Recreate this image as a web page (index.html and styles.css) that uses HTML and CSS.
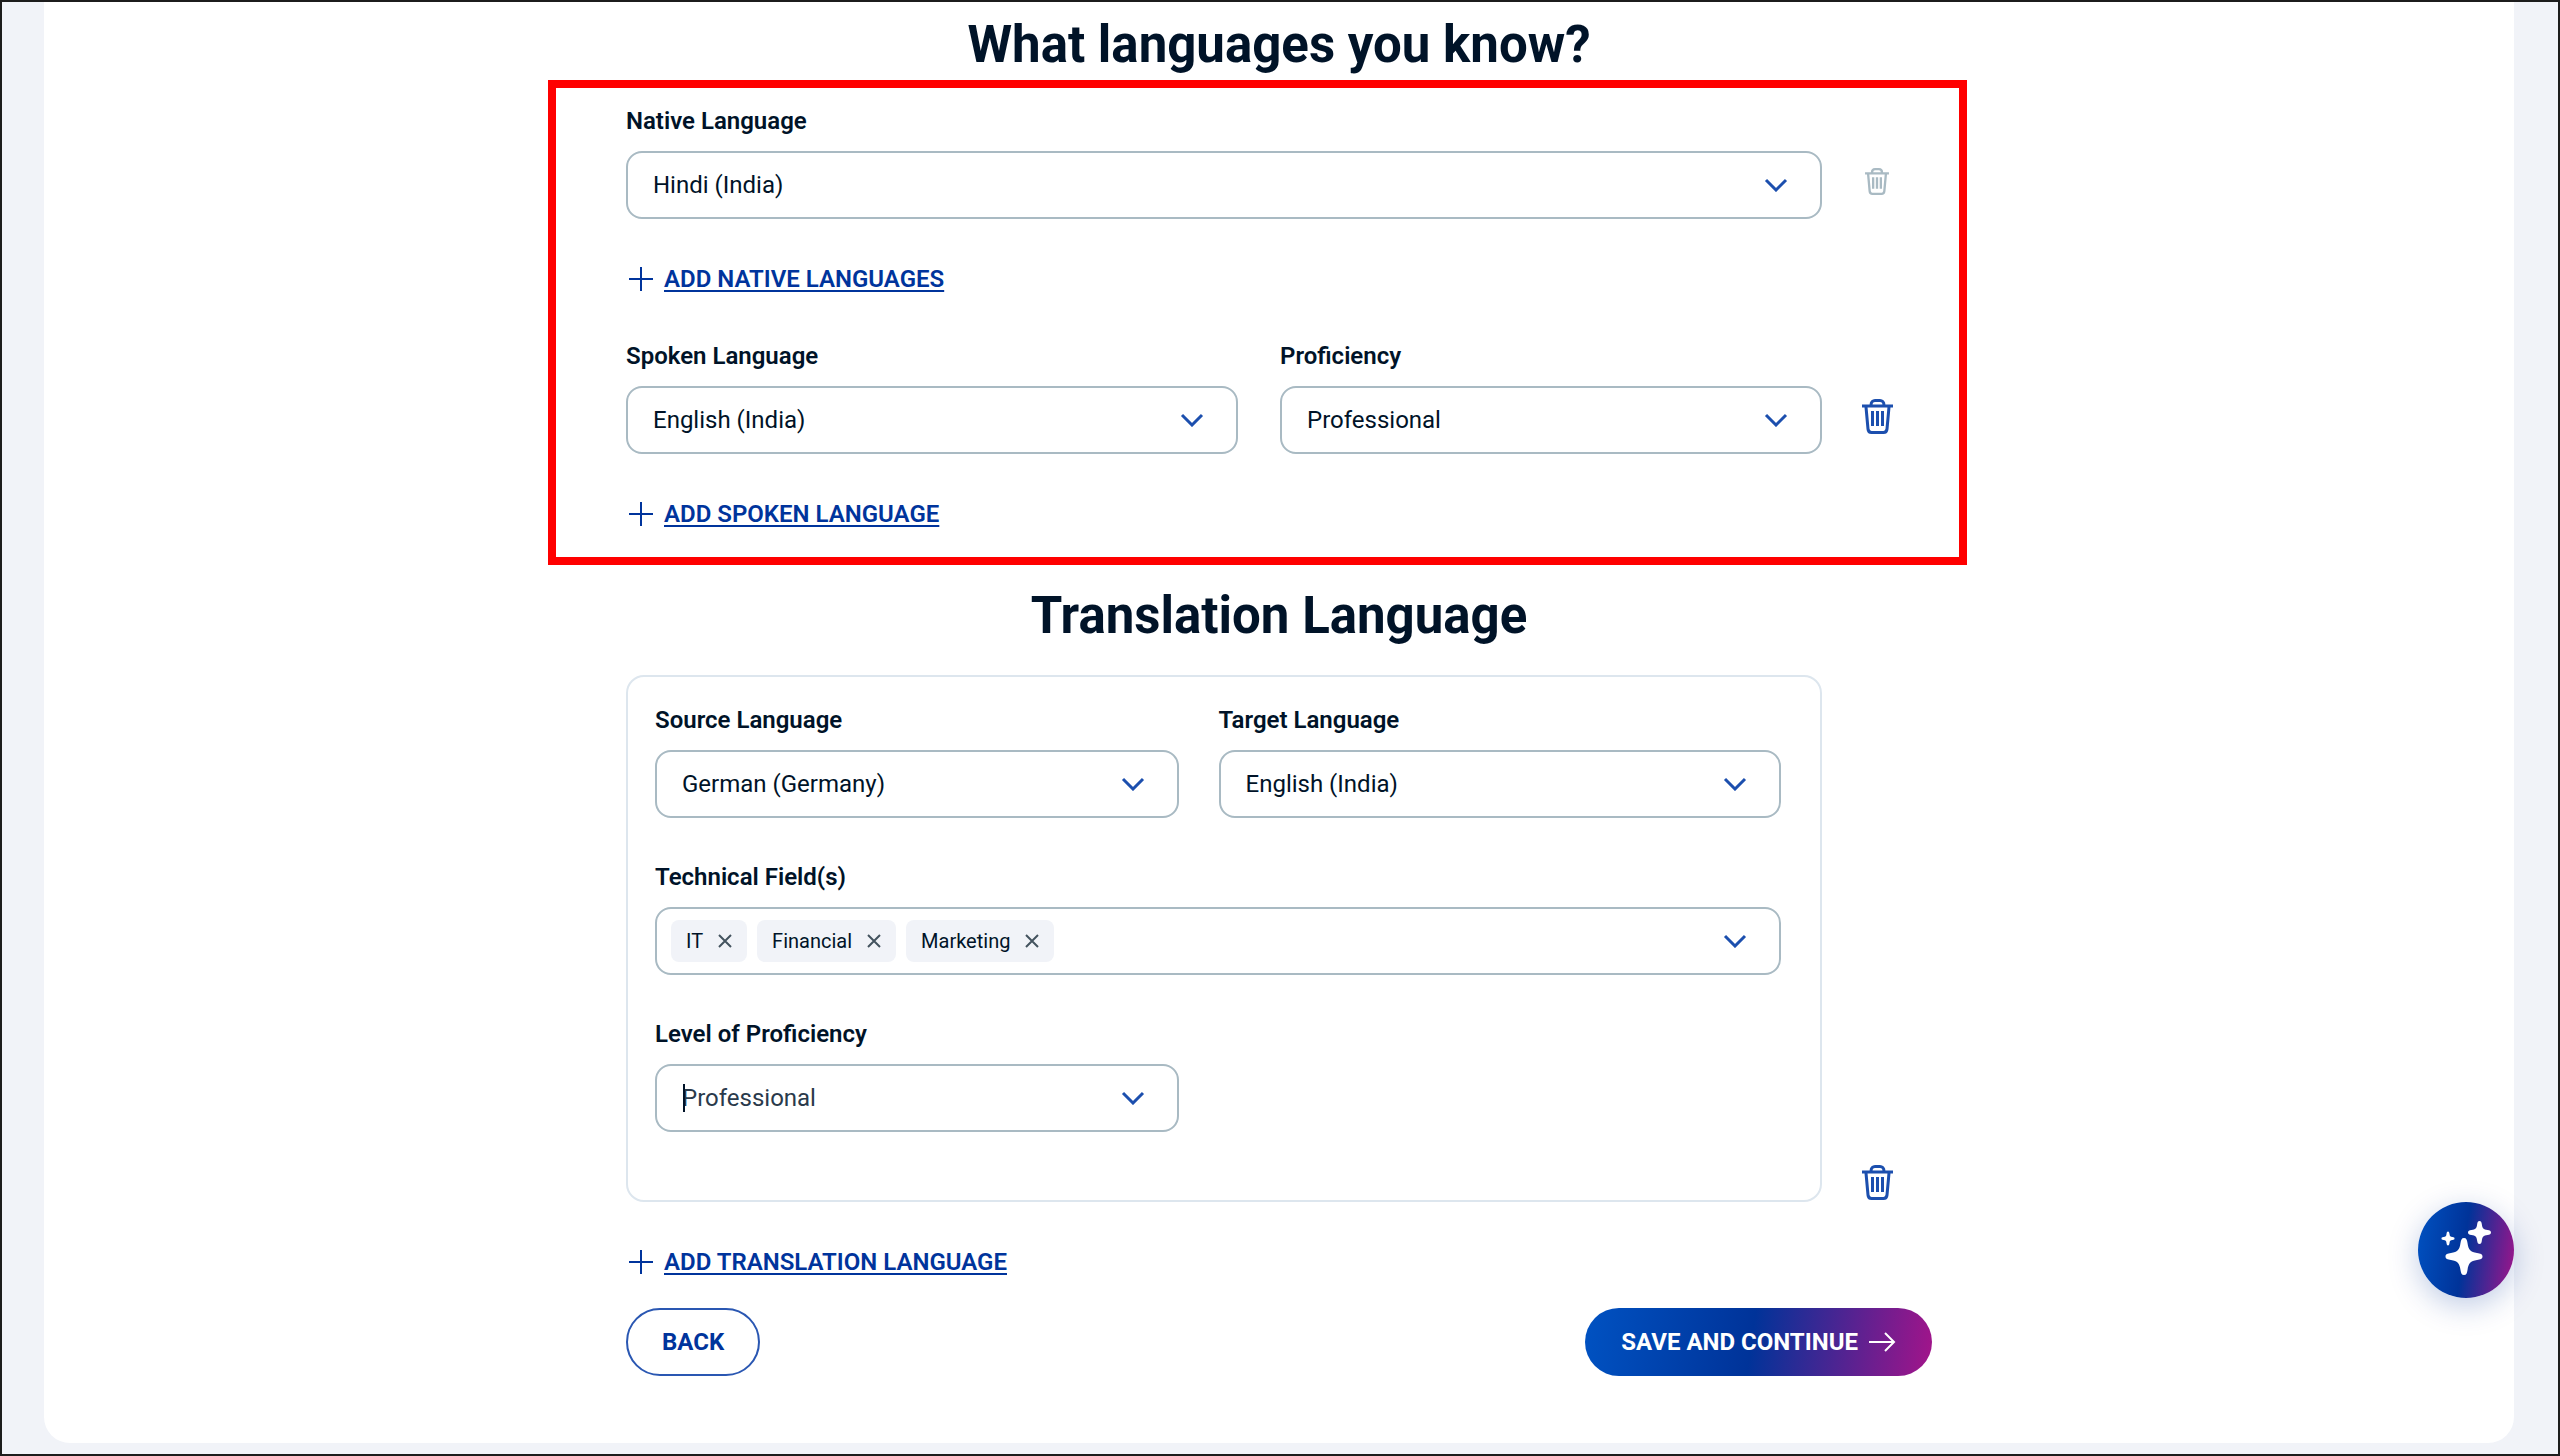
FILE: index.html
```html
<!DOCTYPE html>
<html lang="en">
<head>
    <meta charset="UTF-8">
    <meta name="viewport" content="width=device-width, initial-scale=1.0">
    <title>Languages</title>
    <link rel="stylesheet" href="styles.css">
</head>
<body>
    <!-- Shared icons -->
    <svg class="icon-defs" aria-hidden="true">
        <symbol id="icon-trash" viewBox="0 0 33 35">
            <path d="M1 7H32M10 6C10 3 12 1.5 14 1.5H19C21 1.5 23 3 23 6M5 8L7 30C7.200 32 8.500 33.500 10.500 33.500H22.500C24.500 33.500 25.800 32 26 30L28 8M11.500 12V27M16.500 12V27M21.500 12V27"/>
        </symbol>
        <symbol id="icon-plus" viewBox="0 0 26 26">
            <path d="M13 1V25M1 13H25"/>
        </symbol>
        <symbol id="icon-close" viewBox="0 0 14 14">
            <path d="M1 1L13 13M13 1L1 13"/>
        </symbol>
    </svg>

    <main class="page-card">
        <form class="language-form" id="languageForm">
            <h1>What languages you know?</h1>
            <section class="known-languages">
                <div class="form-row">
                    <div class="form-group">
                        <label for="nativeLanguage">Native Language</label>
                        <select class="control" id="nativeLanguage">
                            <option>Hindi (India)</option>
                        </select>
                    </div>
                    <button type="button" class="delete-btn small" aria-label="Delete native language" disabled>
                        <svg><use href="#icon-trash"/></svg>
                    </button>
                </div>
                <a href="#" class="add-link"><svg><use href="#icon-plus"/></svg><span>ADD NATIVE LANGUAGES</span></a>

                <div class="form-row">
                    <div class="spoken-fields">
                        <div class="form-group">
                            <label for="spokenLanguage">Spoken Language</label>
                            <select class="control" id="spokenLanguage">
                                <option>English (India)</option>
                            </select>
                        </div>
                        <div class="form-group">
                            <label for="proficiency">Proficiency</label>
                            <select class="control" id="proficiency">
                                <option>Professional</option>
                            </select>
                        </div>
                    </div>
                    <button type="button" class="delete-btn" aria-label="Delete spoken language">
                        <svg><use href="#icon-trash"/></svg>
                    </button>
                </div>
                <a href="#" class="add-link"><svg><use href="#icon-plus"/></svg><span>ADD SPOKEN LANGUAGE</span></a>
            </section>

            <h2>Translation Language</h2>
            <section>
                <div class="form-row">
                    <div class="translation-card">
                        <div class="form-group">
                            <label for="sourceLanguage">Source Language</label>
                            <select class="control" id="sourceLanguage">
                                <option>German (Germany)</option>
                            </select>
                        </div>
                        <div class="form-group">
                            <label for="targetLanguage">Target Language</label>
                            <select class="control" id="targetLanguage">
                                <option>English (India)</option>
                            </select>
                        </div>
                        <div class="form-group full">
                            <label for="technicalFields">Technical Field(s)</label>
                            <div class="control tag-box">
                                <span class="tag">IT <button type="button" aria-label="Remove IT"><svg><use href="#icon-close"/></svg></button></span>
                                <span class="tag">Financial <button type="button" aria-label="Remove Financial"><svg><use href="#icon-close"/></svg></button></span>
                                <span class="tag">Marketing <button type="button" aria-label="Remove Marketing"><svg><use href="#icon-close"/></svg></button></span>
                                <input type="text" id="technicalFields">
                            </div>
                        </div>
                        <div class="form-group focused">
                            <label for="level">Level of Proficiency</label>
                            <select class="control" id="level">
                                <option>Professional</option>
                            </select>
                        </div>
                    </div>
                    <button type="button" class="delete-btn low" aria-label="Delete translation language">
                        <svg><use href="#icon-trash"/></svg>
                    </button>
                </div>
                <a href="#" class="add-link"><svg><use href="#icon-plus"/></svg><span>ADD TRANSLATION LANGUAGE</span></a>
            </section>

            <div class="form-actions">
                <button type="button" class="btn btn-back">BACK</button>
                <button type="submit" class="btn btn-save">
                    SAVE AND CONTINUE
                    <svg viewBox="0 0 28 20"><path d="M1 10H26M17 1L26 10L17 19"/></svg>
                </button>
            </div>
        </form>
    </main>

    <button type="button" class="assistant-btn" aria-label="Open assistant">
        <svg viewBox="0 0 96 96">
            <path d="M46 36C48.500 36 49 38 49.500 41C50.500 48 52.500 50 59 51C62.500 51.500 64.500 52 64.500 54.500C64.500 57 62.500 57.500 59 58C52.500 59 50.500 61 49.500 68C49 71 48.500 73 46 73C43.500 73 43 71 42.500 68C41.500 61 39.500 59 33 58C29.500 57.500 27.500 57 27.500 54.500C27.500 52 29.500 51.500 33 51C39.500 50 41.500 48 42.500 41C43 38 43.500 36 46 36Z"/>
            <path d="M61.500 19C63 19 63.500 20 63.800 22C64.300 26.500 65.500 27.500 69.500 28C71.800 28.300 73 29 73 30.500C73 32 71.800 32.700 69.500 33C65.500 33.500 64.300 34.500 63.800 39C63.500 41 63 42 61.500 42C60 42 59.500 41 59.200 39C58.700 34.500 57.500 33.500 53.500 33C51.200 32.700 50 32 50 30.500C50 29 51.200 28.300 53.500 28C57.500 27.500 58.700 26.500 59.200 22C59.500 20 60 19 61.500 19Z"/>
            <path d="M30 29.500C31 29.500 31.300 30.500 31.500 32C31.800 34.300 32.300 34.800 34.500 35C36 35.200 36.500 35.500 36.500 36.500C36.500 37.500 36 37.800 34.500 38C32.300 38.200 31.800 38.700 31.500 41C31.300 42.500 31 43.500 30 43.500C29 43.500 28.700 42.500 28.500 41C28.200 38.700 27.700 38.200 25.500 38C24 37.800 23.500 37.500 23.500 36.500C23.500 35.500 24 35.200 25.500 35C27.700 34.800 28.200 34.300 28.500 32C28.700 30.500 29 29.500 30 29.500Z"/>
        </svg>
    </button>
</body>
</html>
```
FILE: styles.css
```css
* {
    box-sizing: border-box;
}

body {
    margin: 0;
    padding: 0 44px 10px 42px;
    min-height: 100vh;
    border: 2px solid #1c1c1c;
    background-color: #f1f3f8;
    color: #001328;
    font-family: Roboto, "Liberation Sans", sans-serif;
    font-size: 24px;
    line-height: 28px;
}

svg {
    fill: none;
    stroke: currentColor;
    stroke-width: 2;
}

.icon-defs {
    display: none;
}

.page-card {
    padding: 13px 24px 67px;
    background-color: #fff;
    border-radius: 0 0 26px 26px;
}

.language-form {
    max-width: 1306px;
    margin: 0 auto;
}

h1,
h2 {
    margin: 0;
    font-size: 51px;
    font-weight: 700;
    line-height: 60px;
    text-align: center;
}

h1 {
    margin-bottom: 32px;
}

h2 {
    margin-top: 58px;
    margin-bottom: 29px;
}

/* Highlight frame drawn over the first group */
.known-languages {
    position: relative;
}

.known-languages::after {
    content: "";
    position: absolute;
    inset: -27px -35px -37px -78px;
    border: 8px solid #ff0000;
    pointer-events: none;
}

.form-row {
    display: grid;
    grid-template-columns: 1fr 110px;
    align-items: end;
}

.spoken-fields {
    display: grid;
    grid-template-columns: 612fr 542fr;
    gap: 42px;
}

.form-group {
    display: flex;
    flex-direction: column;
    gap: 16px;
    min-width: 0;
}

.form-group label {
    font-weight: 600;
}

.control {
    width: 100%;
    height: 68px;
    padding: 0 70px 0 25px;
    border: 2px solid #a9bac3;
    border-radius: 16px;
    appearance: none;
    background: #fff url("data:image/svg+xml,%3Csvg xmlns='http://www.w3.org/2000/svg' width='24' height='14' fill='none' stroke='%231c4fae' stroke-width='3'%3E%3Cpath d='M2 2L12 12L22 2'/%3E%3C/svg%3E") no-repeat right 32px center;
    color: #001328;
    font-family: inherit;
    font-size: 24px;
}

.add-link {
    display: flex;
    align-items: center;
    gap: 10px;
    width: max-content;
    margin-top: 46px;
    padding-left: 2px;
    color: #00349c;
    font-weight: 600;
    text-decoration: none;
}

.add-link span {
    text-decoration: underline;
    text-decoration-thickness: 2px;
    text-underline-offset: 3px;
}

.add-link svg {
    width: 26px;
    height: 26px;
}

.add-link + .form-row {
    margin-top: 49px;
}

.delete-btn {
    display: flex;
    align-items: center;
    justify-content: center;
    height: 76px;
    padding: 0;
    border: none;
    background: none;
    color: #1c4fae;
    cursor: pointer;
}

.delete-btn svg {
    width: 33px;
    height: 35px;
    stroke-width: 3;
}

.delete-btn.small svg {
    width: 26px;
    height: 27px;
}

.delete-btn.low {
    height: 40px;
}

.delete-btn:disabled {
    color: #a9bac3;
    cursor: default;
}

.translation-card {
    display: grid;
    grid-template-columns: 524fr 563fr;
    gap: 45px 40px;
    padding: 29px 39px 68px 27px;
    border: 2px solid #dde6ee;
    border-radius: 18px;
}

.full {
    grid-column: 1 / -1;
}

.tag-box {
    display: flex;
    align-items: center;
    gap: 10px;
    padding: 0 70px 0 14px;
}

.tag-box input {
    flex: 1;
    min-width: 0;
    border: none;
    outline: none;
    background: none;
    font-size: 24px;
}

.tag {
    display: flex;
    align-items: center;
    gap: 15px;
    height: 42px;
    padding: 0 15px;
    border-radius: 8px;
    background-color: #f1f3f8;
    font-size: 20px;
}

.tag button {
    display: flex;
    padding: 0;
    border: none;
    background: none;
    color: #44535f;
    cursor: pointer;
}

.tag svg {
    width: 14px;
    height: 14px;
}

/* Text cursor in the focused field */
.focused {
    position: relative;
}

.focused::after {
    content: "";
    position: absolute;
    left: 28px;
    bottom: 20px;
    width: 2px;
    height: 28px;
    background-color: #001328;
}

.focused .control {
    color: #2a3a4b;
}

.form-actions {
    display: flex;
    justify-content: space-between;
    margin-top: 32px;
}

.btn {
    display: flex;
    align-items: center;
    gap: 10px;
    height: 68px;
    padding: 0 36px;
    border: none;
    border-radius: 34px;
    font-family: inherit;
    font-size: 24px;
    font-weight: 700;
    cursor: pointer;
}

.btn-back {
    padding: 0 34px;
    border: 2px solid #2a57b2;
    background-color: #fff;
    color: #00349c;
}

.btn-save {
    background: linear-gradient(98deg, #0052c2, #003399 48%, #a3148a);
    color: #fff;
}

.btn-save svg {
    width: 28px;
    height: 20px;
}

.assistant-btn {
    position: fixed;
    right: 46px;
    bottom: 158px;
    width: 96px;
    height: 96px;
    padding: 0;
    border: none;
    border-radius: 50%;
    background: linear-gradient(98deg, #0052c2, #003399 48%, #a3148a);
    box-shadow: 0 8px 30px rgba(0, 51, 153, 0.25);
    cursor: pointer;
}

.assistant-btn svg {
    display: block;
    fill: #fff;
    stroke: none;
}
```
